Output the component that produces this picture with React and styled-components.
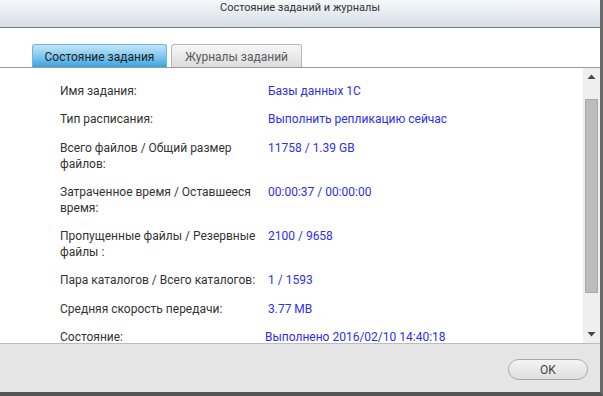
import React from "react";
import styled, { createGlobalStyle } from "styled-components";

const Global = createGlobalStyle`
  html, body { margin: 0; padding: 0; background: #fff; }
  body { font-family: Roboto, "Noto Sans", Arial, sans-serif; }
`;

const Window = styled.div`
  width: 600px;
  height: 392px;
  border-right: 3px solid #6a6a6a;
  border-bottom: 4px solid #555;
  display: flex;
  flex-direction: column;
  background: #fff;
  overflow: hidden;
`;

const TitleBar = styled.div`
  height: 28px;
  flex: none;
  border-bottom: 1px solid #7c7c7c;
  background: linear-gradient(#f6f8fa, #d6dee5);
  display: flex;
  justify-content: center;
  padding-top: 1px;
  box-sizing: border-box;
  font-size: 11px;
  color: #333;
  line-height: 14px;
`;

const TabStrip = styled.div`
  height: 40px;
  flex: none;
  box-sizing: border-box;
  padding-left: 32px;
  display: flex;
  align-items: flex-end;
  gap: 4px;
  border-bottom: 1px solid #9a9a9a;
`;

const Tab = styled.div`
  width: ${(p) => p.$w}px;
  height: 23px;
  box-sizing: border-box;
  border: 1px solid ${(p) => (p.$active ? "#6fb4dc" : "#b8b8b8")};
  border-bottom: none;
  border-radius: 3px 3px 0 0;
  background: ${(p) =>
    p.$active
      ? "linear-gradient(#c4e6fa, #7cc5ee 55%, #38a3e0)"
      : "linear-gradient(#f7f7f7, #dcdcdc)"};
  color: ${(p) => (p.$active ? "#1e1e1e" : "#5a5a5a")};
  font-size: 12px;
  display: flex;
  align-items: center;
  justify-content: center;
  padding-top: 1px;
`;

const Body = styled.div`
  height: 275px;
  flex: none;
  display: flex;
`;

const List = styled.div`
  flex: 1;
  overflow: hidden;
  padding: 15px 0 0 60px;
  display: grid;
  grid-template-columns: 200px 1fr;
  column-gap: 8px;
  row-gap: 12.3px;
  align-content: start;
  font-size: 12px;
  line-height: 16px;
`;

const Label = styled.div`
  color: #333;
`;

const Value = styled.div`
  color: #2e2ef0;
  margin-left: ${(p) => p.$shift || 0}px;
`;

const Scrollbar = styled.div`
  width: 17px;
  flex: none;
  background: #efefef;
  display: flex;
  flex-direction: column;
  align-items: center;
`;

const Arrow = styled.div`
  height: ${(p) => p.$h}px;
  display: flex;
  align-items: center;
  justify-content: center;
  flex: none;
`;

const Thumb = styled.div`
  width: 13px;
  height: 194px;
  box-sizing: border-box;
  background: #bdbdbd;
  border: 1px solid #a9a9a9;
  flex: none;
`;

const Footer = styled.div`
  flex: 1;
  border-top: 1px solid #bdbdbd;
  background: #e6e6e6;
  display: flex;
  justify-content: flex-end;
  align-items: flex-start;
  padding: 15px 12px 0 0;
`;

const OkButton = styled.button`
  width: 80px;
  height: 21px;
  border: 1px solid #a8a8a8;
  border-radius: 11px;
  background: linear-gradient(#f4f4f4, #dedede);
  font-family: inherit;
  font-size: 12px;
  color: #444;
  padding: 0;
`;

const Tri = ({ up }) => (
  <svg width="9" height="5" viewBox="0 0 9 5">
    <path d={up ? "M0.5 5 L4.5 0.5 L8.5 5 Z" : "M0.5 0 L4.5 4.5 L8.5 0 Z"} fill="#4a4a4a" />
  </svg>
);

const rows = [
  ["Имя задания:", "Базы данных 1С"],
  ["Тип расписания:", "Выполнить репликацию сейчас"],
  ["Всего файлов / Общий размер файлов:", "11758 / 1.39 GB"],
  ["Затраченное время / Оставшееся время:", "00:00:37 / 00:00:00"],
  ["Пропущенные файлы / Резервные файлы :", "2100 / 9658"],
  ["Пара каталогов / Всего каталогов:", "1 / 1593"],
  ["Средняя скорость передачи:", "3.77 MB"],
  ["Состояние:", "Выполнено 2016/02/10 14:40:18", -3],
];

export default function App() {
  return (
    <>
      <Global />
      <Window>
        <TitleBar>Состояние заданий и журналы</TitleBar>
        <TabStrip>
          <Tab $active $w={135}>Состояние задания</Tab>
          <Tab $w={131}>Журналы заданий</Tab>
        </TabStrip>
        <Body>
          <List>
            {rows.map(([l, v, s]) => (
              <React.Fragment key={l}>
                <Label>{l}</Label>
                <Value $shift={s}>{v}</Value>
              </React.Fragment>
            ))}
          </List>
          <Scrollbar>
            <Arrow $h={17}><Tri up /></Arrow>
            <div style={{ height: 14 }} />
            <Thumb />
            <div style={{ flex: 1 }} />
            <Arrow $h={17}><Tri /></Arrow>
          </Scrollbar>
        </Body>
        <Footer>
          <OkButton>OK</OkButton>
        </Footer>
      </Window>
    </>
  );
}
